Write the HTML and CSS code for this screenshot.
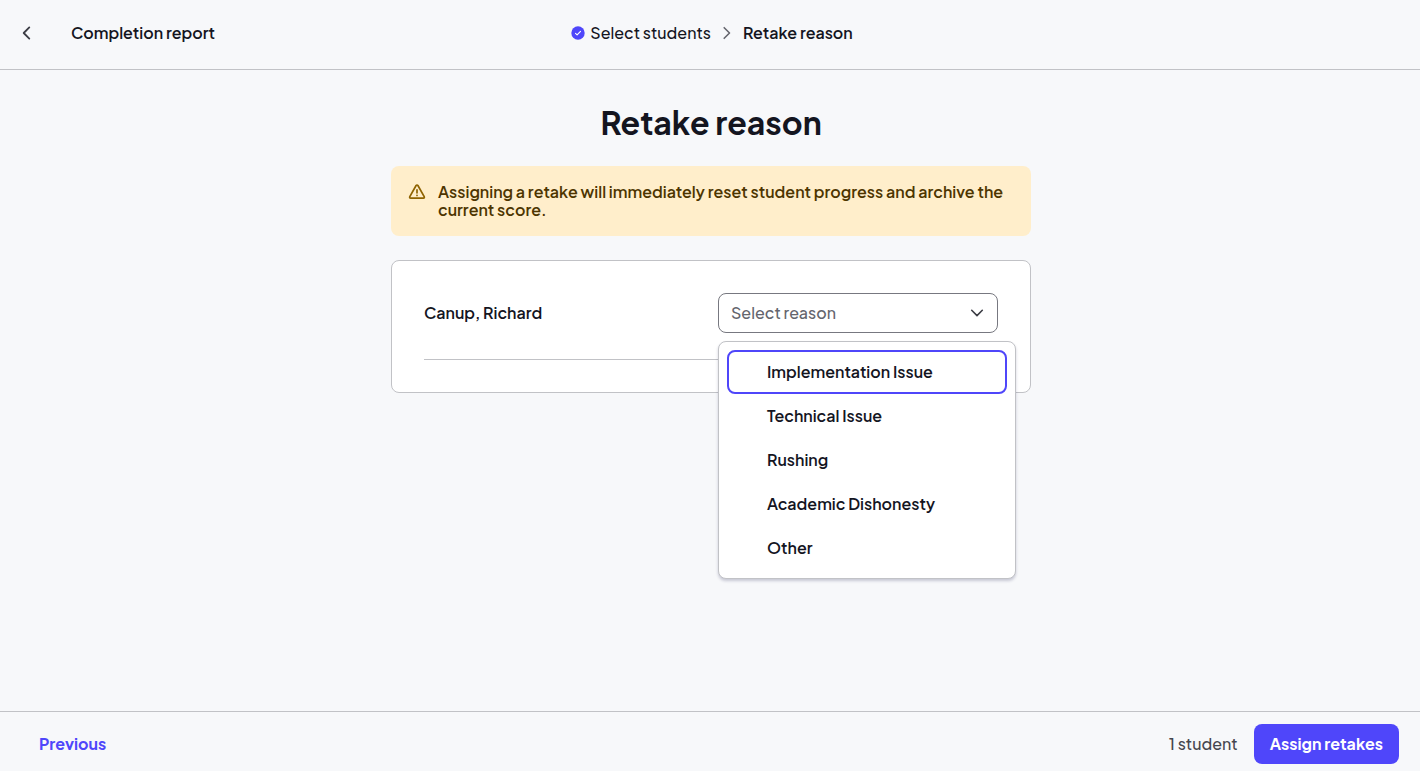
FILE: index.html
```html
<!DOCTYPE html>
<html lang="en">
<head>
<meta charset="utf-8">
<meta name="viewport" content="width=device-width, initial-scale=1">
<title>Retake reason</title>
<link rel="stylesheet" href="styles.css">
</head>
<body>
<header class="topbar">
  <div class="topbar-start">
    <button class="back" type="button" aria-label="Back">
      <svg width="10" height="14" viewBox="0 0 10 14" fill="none" stroke="currentColor" stroke-width="1.8" stroke-linecap="round" stroke-linejoin="round"><path d="M7.300 1.400 1.700 7l5.600 5.600"/></svg>
    </button>
    <span class="topbar-title">Completion report</span>
  </div>
  <nav class="steps" aria-label="Progress">
    <a class="step" href="#students">
      <svg width="14" height="14" viewBox="0 0 14 14" aria-hidden="true"><circle cx="7" cy="7" r="6.7" fill="#4f46fa"/><path d="m4.500 7.400 1.600 1.500 3.400-3.600" fill="none" stroke="#fff" stroke-width="1.1" stroke-linecap="round" stroke-linejoin="round"/></svg>
      Select students
    </a>
    <svg class="step-arrow" width="8" height="14" viewBox="0 0 8 14" fill="none" stroke="currentColor" stroke-width="1.6" stroke-linecap="round" stroke-linejoin="round" aria-hidden="true"><path d="m1.200 1.700 5.300 5.300-5.300 5.300"/></svg>
    <span class="step-current" aria-current="step">Retake reason</span>
  </nav>
</header>

<main class="content">
  <h1 class="heading">Retake reason</h1>
  <div class="notice" role="alert">
    <svg class="notice-icon" width="18" height="18" viewBox="0 0 18 18" fill="none" stroke="currentColor" stroke-width="1.7" stroke-linecap="round" stroke-linejoin="round" aria-hidden="true"><path d="M8.100 2.500 1.800 13.700c-.4.800 0 1.400.8 1.400h12.800c.8 0 1.200-.6.800-1.400L9.900 2.500c-.4-.7-1.400-.7-1.800 0Z"/><path d="M9 6.800v3M9 12.300v.1"/></svg>
    <p class="notice-text">Assigning a retake will immediately reset student progress and archive the current score.</p>
  </div>
  <section class="card">
    <div class="student">
      <label class="student-name" for="reason">Canup, Richard</label>
      <div class="field">
        <select class="select" id="reason">
          <option>Select reason</option>
        </select>
        <svg class="select-arrow" width="14" height="8" viewBox="0 0 14 8" fill="none" stroke="currentColor" stroke-width="1.6" stroke-linecap="round" stroke-linejoin="round" aria-hidden="true"><path d="m1.700 1.300 5.300 5.300 5.300-5.300"/></svg>
        <ul class="menu" role="listbox" aria-label="Reasons">
          <li class="option option-focused" role="option" aria-selected="false">Implementation Issue</li>
          <li class="option" role="option" aria-selected="false">Technical Issue</li>
          <li class="option" role="option" aria-selected="false">Rushing</li>
          <li class="option" role="option" aria-selected="false">Academic Dishonesty</li>
          <li class="option" role="option" aria-selected="false">Other</li>
        </ul>
      </div>
    </div>
  </section>
</main>

<footer class="bottombar">
  <button class="previous" type="button">Previous</button>
  <div class="bottombar-end">
    <span class="count">1 student</span>
    <button class="assign" type="button">Assign retakes</button>
  </div>
</footer>
</body>
</html>
```

FILE: styles.css
```css
*, *::before, *::after { box-sizing: border-box; }

body {
  margin: 0;
  min-height: 100vh;
  display: flex;
  flex-direction: column;
  background: #f7f8fa;
  color: #14151f;
  font: 600 16px/24px "Plus Jakarta Sans", Inter, sans-serif;
}

button, select { font: inherit; }
button { cursor: pointer; }

.topbar {
  display: grid;
  grid-template-columns: 1fr auto 1fr;
  align-items: center;
  padding: 13px 16px 16px 20px;
  border-bottom: 1px solid #c1c2c6;
}
.topbar-start { display: flex; align-items: center; gap: 37px; }
.back {
  display: flex;
  align-items: center;
  height: 40px;
  padding: 0 2px;
  border: 0;
  background: none;
  color: #3c3d45;
}
.steps { display: flex; align-items: center; gap: 12px; }
.step {
  display: flex;
  align-items: center;
  gap: 5px;
  color: #14151f;
  font-weight: 500;
  text-decoration: none;
}
.step-arrow { color: #64656d; }

.content {
  flex: 1;
  display: flex;
  flex-direction: column;
  gap: 24px;
  width: 100%;
  max-width: 688px;
  margin: 0 auto;
  padding: 32px 23px 24px 25px;
}
.heading {
  margin: 0;
  font-size: 32px;
  line-height: 40px;
  font-weight: 700;
  text-align: center;
}
.notice {
  display: flex;
  gap: 12px;
  padding: 17px;
  border-radius: 8px;
  background: #ffeecb;
  color: #4d3500;
}
.notice-icon { flex: none; color: #8f6300; }
.notice-text { margin: 0; line-height: 18px; }

.card {
  padding: 32px;
  border: 1px solid #c1c2c6;
  border-radius: 8px;
  background: #fff;
}
.student {
  display: flex;
  align-items: center;
  justify-content: space-between;
  gap: 24px;
  padding-bottom: 26px;
  border-bottom: 1px solid #c1c2c6;
}
.field { position: relative; flex: 0 1 280px; }
.select {
  display: block;
  width: 100%;
  height: 40px;
  padding: 0 40px 0 12px;
  border: 1px solid #777880;
  border-radius: 8px;
  appearance: none;
  background: #fff;
  color: #64656d;
  font-weight: 500;
}
.select-arrow {
  position: absolute;
  top: 16px;
  right: 14px;
  color: #3c3d45;
  pointer-events: none;
}
.menu {
  position: absolute;
  top: 48px;
  left: 0;
  width: 298px;
  margin: 0;
  padding: 8px;
  border: 1px solid #c1c2c6;
  border-radius: 8px;
  background: #fff;
  box-shadow: 0 2px 3px rgba(30, 30, 80, 0.22);
  list-style: none;
}
.option {
  padding: 8px 16px 8px 38px;
  border: 2px solid transparent;
  border-radius: 8px;
}
.option-focused { border-color: #4f46fa; }

.bottombar {
  display: flex;
  align-items: center;
  justify-content: space-between;
  padding: 12px 21px 7px 23px;
  border-top: 1px solid #c1c2c6;
}
.previous, .assign {
  height: 40px;
  padding: 0 16px;
  border: 0;
  border-radius: 8px;
  font-weight: 700;
}
.previous { background: none; color: #4f46fa; }
.assign { background: #4f46fa; color: #fff; }
.bottombar-end { display: flex; align-items: center; gap: 16px; }
.count { color: #45464e; font-weight: 500; }
```
